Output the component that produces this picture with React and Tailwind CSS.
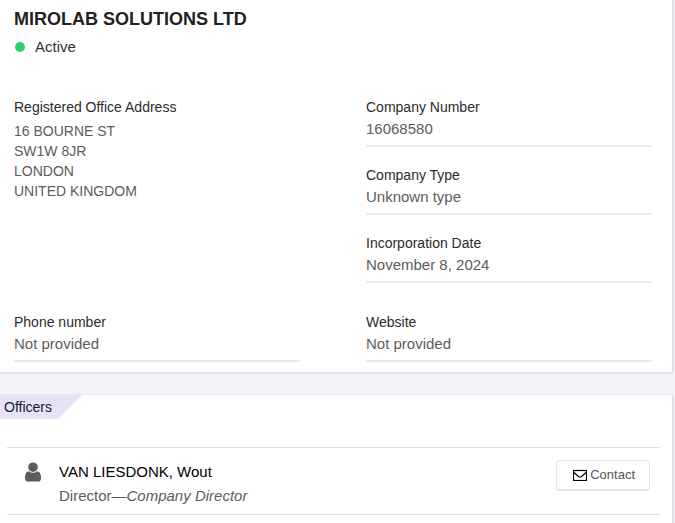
const address = ['16 BOURNE ST', 'SW1W 8JR', 'LONDON', 'UNITED KINGDOM']

const companyInfo = [
    { label: 'Company Number', value: '16068580' },
    { label: 'Company Type', value: 'Unknown type' },
    { label: 'Incorporation Date', value: 'November 8, 2024' },
]

const contactInfo = [
    { label: 'Phone number', value: 'Not provided' },
    { label: 'Website', value: 'Not provided' },
]

const officers = [
    { name: 'VAN LIESDONK, Wout', role: 'Director', occupation: 'Company Director' },
]

function UserIcon() {
    return (
        <svg className="w-4 h-5 mt-0.5 text-[#5f5b5b]" viewBox="0 0 1280 1536" fill="currentColor" aria-hidden="true">
            <path d="M1280 1271q0 109-62.5 187t-150.5 78h-854q-88 0-150.5-78t-62.5-187q0-85 8.5-160.5t31.5-152 58.5-131 94-89 134.5-34.5q131 128 313 128t313-128q76 0 134.5 34.5t94 89 58.5 131 31.5 152 8.5 160.5zm-256-887q0 159-112.5 271.5t-271.5 112.5-271.5-112.5-112.5-271.5 112.5-271.5 271.5-112.5 271.5 112.5 112.5 271.5z" />
        </svg>
    )
}

function MailIcon() {
    return (
        <svg className="w-3.5 h-3 text-black" viewBox="0 0 14 12" fill="none" stroke="currentColor" aria-hidden="true">
            <rect x="0.5" y="1.5" width="13" height="10" strokeWidth="1.2" />
            <path d="M1 3.500l4.500 4q1.500 1 3 0l4.500-4" strokeWidth="1.2" />
        </svg>
    )
}

function Field({ label, value }) {
    return (
        <div className="border-b-2 border-[#ebebeb] pb-1">
            <dt className="text-[14px] leading-5 text-[#2b2b2b]">{label}</dt>
            <dd className="text-[15px] leading-6 text-[#5f5b5b]">{value}</dd>
        </div>
    )
}

export default function App() {
    return (
        <div className="min-h-screen bg-[#f3f4f9] pr-px font-['Liberation_Sans',Arial,sans-serif]">
            <section className="bg-white rounded-br border-r-2 border-b-2 border-[#dfe1ec] pt-[7px] pl-3.5 pr-5 pb-2.5">
                <h1 className="text-[18px] leading-6 font-bold text-[#222]">MIROLAB SOLUTIONS LTD</h1>
                <div className="flex items-center gap-2.5 mt-1 pl-px text-[15px] leading-6 text-[#333]">
                    <span className="size-2.5 rounded-full bg-[#2ecc71]" />
                    Active
                </div>

                <div className="grid grid-cols-2 gap-x-[66px] mt-[38px]">
                    <div>
                        <h2 className="text-[14px] leading-5 text-[#2b2b2b]">Registered Office Address</h2>
                        <address className="not-italic mt-1 text-[14px] leading-5 text-[#5f5b5b]">
                            {address.map(line => <div key={line}>{line}</div>)}
                        </address>
                    </div>
                    <dl className="flex flex-col gap-[18px]">
                        {companyInfo.map(f => <Field key={f.label} {...f} />)}
                    </dl>
                </div>

                <dl className="grid grid-cols-2 gap-x-[66px] mt-[29px]">
                    {contactInfo.map(f => <Field key={f.label} {...f} />)}
                </dl>
            </section>

            <section className="mt-5 bg-white rounded-tr border-t border-r-2 border-t-[#e6e8f1] border-r-[#dfe1ec] pb-8">
                <h2 className="w-fit bg-[#e9e2f7] pl-1 pr-[30px] text-[14px] leading-6 text-[#0f1b33] [clip-path:polygon(0_0,100%_0,calc(100%-24px)_100%,0_100%)]">
                    Officers
                </h2>

                <ul className="mt-7 ml-[7px] mr-3 border-t border-[#dedede]">
                    {officers.map(o => (
                        <li key={o.name} className="flex items-start border-b border-[#dedede] pt-3 pb-1.5 pl-[18px] pr-2.5">
                            <UserIcon />
                            <div className="flex-1 ml-[18px] text-[15px] leading-6">
                                <p className="text-black">{o.name}</p>
                                <p className="text-[#5f5b5b]">{o.role}—<em>{o.occupation}</em></p>
                            </div>
                            <button className="flex items-center gap-[3px] rounded border border-b-2 border-[#e2e5f0] bg-white pl-4 pr-3.5 py-1 text-[13px] leading-5 text-[#555] cursor-pointer">
                                <MailIcon />
                                Contact
                            </button>
                        </li>
                    ))}
                </ul>
            </section>
        </div>
    )
}
